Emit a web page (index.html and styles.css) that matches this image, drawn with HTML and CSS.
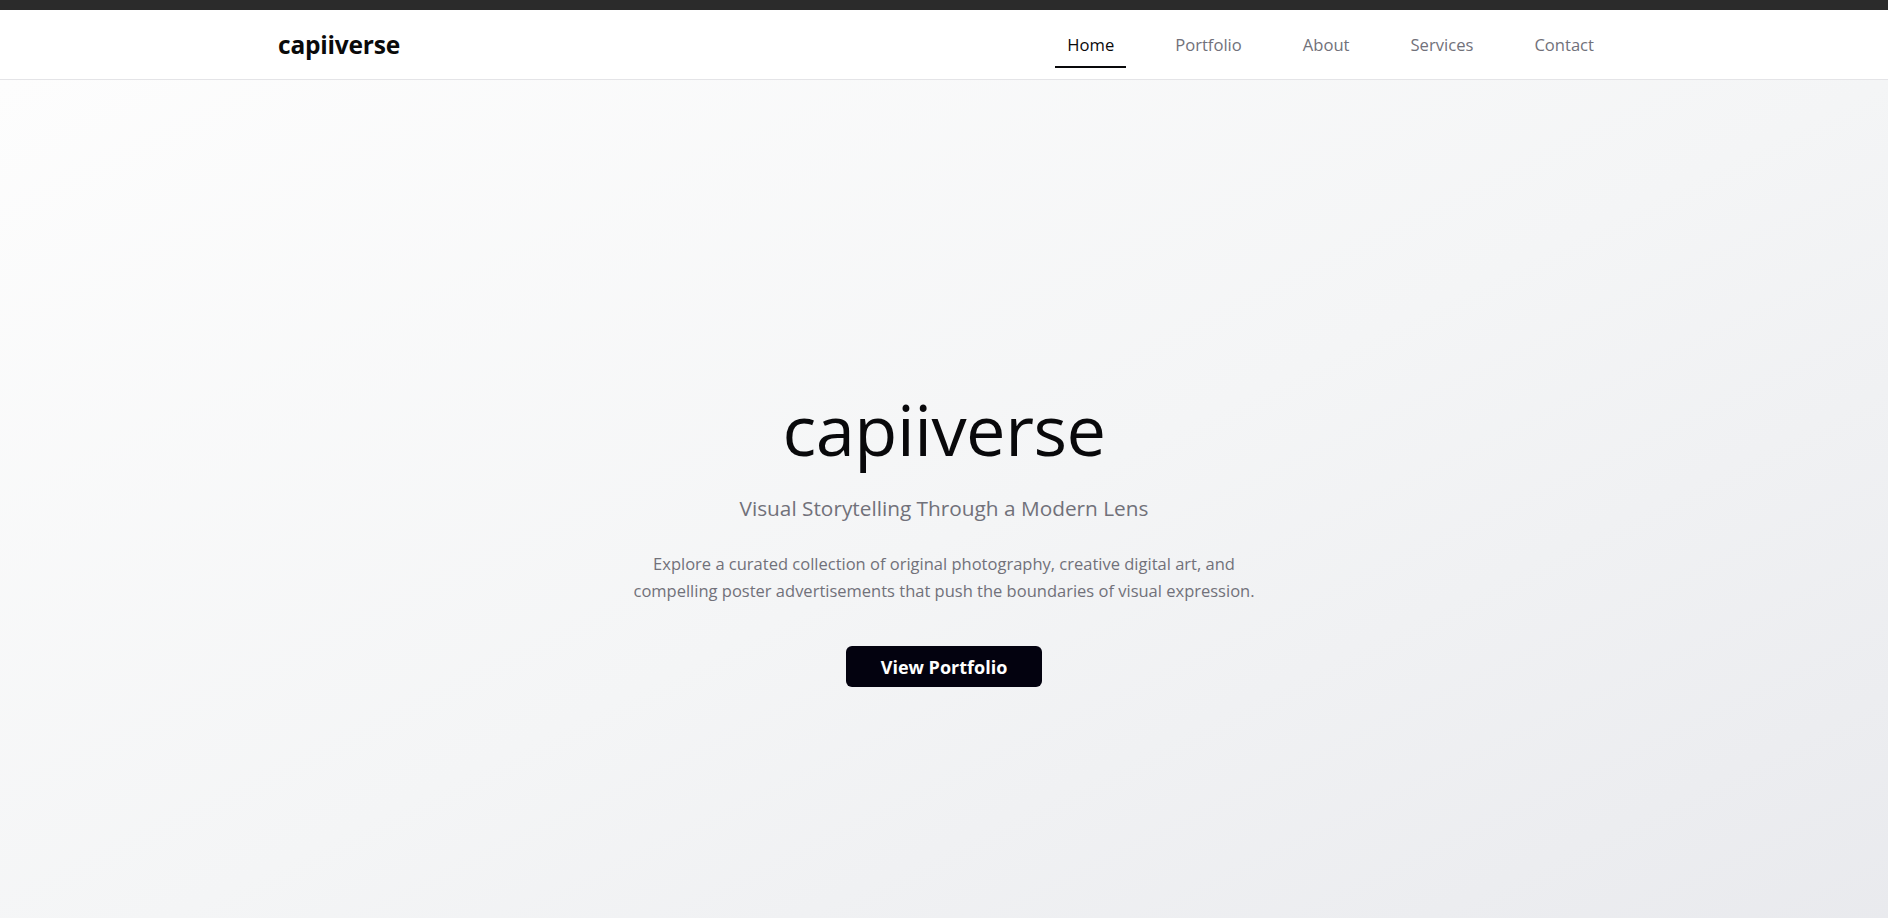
FILE: index.html
```html
<!DOCTYPE html>
<html lang="en">
<head>
<meta charset="utf-8">
<title>capiiverse</title>
<link rel="stylesheet" href="styles.css">
</head>
<body>
<div class="topbar"></div>
<header class="site-header">
  <div class="container header-inner">
    <a class="logo" href="#">capiiverse</a>
    <nav class="nav">
      <a class="nav-link active" href="#">Home</a>
      <a class="nav-link" href="#">Portfolio</a>
      <a class="nav-link" href="#">About</a>
      <a class="nav-link" href="#">Services</a>
      <a class="nav-link" href="#">Contact</a>
    </nav>
  </div>
</header>
<main>
  <section class="hero">
    <div class="hero-content">
      <h1 class="hero-title">capiiverse</h1>
      <p class="hero-subtitle">Visual Storytelling Through a Modern Lens</p>
      <p class="hero-text">Explore a curated collection of original photography, creative digital art, and compelling poster advertisements that push the boundaries of visual expression.</p>
      <a class="btn-primary" href="#">View Portfolio</a>
    </div>
  </section>
</main>
</body>
</html>
```
FILE: styles.css
```css
* { box-sizing: border-box; }
html, body { margin: 0; padding: 0; }
body {
  font-family: "Open Sans", "Noto Sans", sans-serif;
  color: #0a0a0a;
  background: #ffffff;
  overflow: hidden;
}
a { text-decoration: none; }

.topbar {
  height: 10px;
  background: #2b2b2b;
}

.site-header {
  height: 70px;
  background: #ffffff;
  border-bottom: 1px solid #e4e4e7;
}
.container {
  width: 1332px;
  margin: 0 auto;
}
.header-inner {
  height: 100%;
  display: flex;
  align-items: center;
  justify-content: space-between;
  padding-right: 4px;
}
.logo {
  font-size: 24.5px;
  font-weight: 700;
  color: #0a0a0a;
  letter-spacing: -0.2px;
}
.nav {
  display: flex;
  align-items: center;
  gap: 37px;
}
.nav-link {
  font-size: 16.6px;
  line-height: 24px;
  padding: 12px 12px 9px;
  color: #71717a;
  border-bottom: 2px solid transparent;
}
.nav-link.active {
  color: #09090b;
  border-bottom-color: #09090b;
}

.hero {
  min-height: 918px;
  background: linear-gradient(to bottom right, #fdfdfd 0%, #f4f5f6 50%, #e8e9ed 100%);
  display: flex;
  align-items: center;
  justify-content: center;
  text-align: center;
}
.hero-content {
  display: flex;
  flex-direction: column;
  align-items: center;
}
.hero-title {
  margin: 0;
  font-size: 70.4px;
  font-weight: 400;
  line-height: 1.1;
  letter-spacing: -0.5px;
  color: #09090b;
}
.hero-subtitle {
  margin: 26px 0 0;
  font-size: 20.8px;
  line-height: 28px;
  color: #71717a;
}
.hero-text {
  margin: 29px 0 0;
  max-width: 640px;
  font-size: 16.5px;
  line-height: 26.5px;
  color: #71717a;
}
.btn-primary {
  margin-top: 42px;
  width: 196px;
  height: 41px;
  display: flex;
  align-items: center;
  justify-content: center;
  background: #03020f;
  color: #ffffff;
  border-radius: 6px;
  font-size: 18px;
  font-weight: 700;
}
```
